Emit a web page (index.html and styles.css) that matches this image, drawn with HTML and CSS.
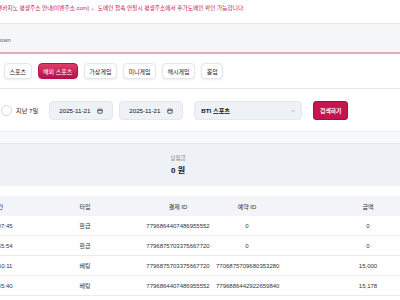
FILE: index.html
```html
<!DOCTYPE html>
<html lang="ko">
<head>
  <meta charset="UTF-8" />
  <meta name="viewport" content="width=device-width, initial-scale=1.0" />
  <title>베팅 내역</title>
  <link rel="stylesheet" href="styles.css">
</head>
<body>
  <div class="page">
    <!-- Notice bar -->
    <div class="notice">텐카지노 평생주소 안내[이벤주소.com] ← 도메인 접속 안될시 평생주소에서 추가도메인 확인 가능합니다.</div>

    <!-- Breadcrumb -->
    <div class="crumb">dropdown</div>

    <!-- Game tabs -->
    <div class="tabs">
      <button class="tab">스포츠</button>
      <button class="tab active">해외 스포츠</button>
      <button class="tab">가상게임</button>
      <button class="tab">미니게임</button>
      <button class="tab">해시게임</button>
      <button class="tab">홀덤</button>
    </div>

    <!-- Filters -->
    <div class="filters">
      <span class="radio"></span>
      <span class="range">지난 7일</span>
      <div class="field date">
        <span>2025-11-21</span>
        <svg viewBox="0 0 8 8" width="6" height="6"><rect x="1" y="1.5" width="6" height="5.5" rx="1" fill="none" stroke="#333" stroke-width="1"/><path d="M1 3.3h6" stroke="#333" stroke-width="1"/></svg>
      </div>
      <div class="field date">
        <span>2025-11-21</span>
        <svg viewBox="0 0 8 8" width="6" height="6"><rect x="1" y="1.5" width="6" height="5.5" rx="1" fill="none" stroke="#333" stroke-width="1"/><path d="M1 3.3h6" stroke="#333" stroke-width="1"/></svg>
      </div>
      <div class="field select">
        <span>BTI 스포츠</span>
        <svg viewBox="0 0 8 8" width="6" height="6"><path d="M2 3l2 2 2-2" fill="none" stroke="#888" stroke-width="0.8"/></svg>
      </div>
      <button class="search">검색하기</button>
    </div>

    <div class="spacer"></div>

    <!-- Summary -->
    <div class="summary">
      <div class="label">당첨금</div>
      <div class="value">0 원</div>
    </div>

    <!-- History table -->
    <div class="table">
      <div class="row head">
        <div>거래 발생 시간</div><div>타입</div><div>결제 ID</div><div>예약 ID</div><div class="amount">금액</div>
      </div>
      <div class="row">
        <div>2025-11-21 09:07:45</div><div>환급</div><div>7796864407486955552</div><div>0</div><div class="amount">0</div>
      </div>
      <div class="row">
        <div>2025-11-21 08:55:54</div><div>환급</div><div>7796875703375667720</div><div>0</div><div class="amount">0</div>
      </div>
      <div class="row">
        <div>2025-11-21 08:50:11</div><div>베팅</div><div>7796875703375667720</div><div>7706875709680353280</div><div class="amount">15,000</div>
      </div>
      <div class="row">
        <div>2025-11-21 08:45:40</div><div>베팅</div><div>7796864407486955552</div><div>7796886442922659840</div><div class="amount">15,178</div>
      </div>
    </div>
  </div>
</body>
</html>
```

FILE: styles.css
```css
/* ===== Base ===== */
* { box-sizing: border-box; margin: 0; padding: 0; }
body {
  overflow: hidden;
  background: #fff;
  color: #222;
  font-family: "Liberation Sans", "Noto Sans CJK KR", sans-serif;
  font-size: 6px;
}
.page { width: 476px; margin-left: -60px; }

/* ===== Top bars ===== */
.notice {
  height: 24px;
  padding-left: 57px;
  display: flex;
  align-items: center;
  color: #c8175a;
  font-size: 5.7px;
  border-bottom: 1px solid #e4e6ea;
  padding-bottom: 8px;
}
.crumb {
  height: 30px;
  padding-left: 46px;
  display: flex;
  align-items: center;
  background: #f5f6f8;
  color: #555;
  font-size: 5.6px;
  border-bottom: 2px solid #e9a9c1;
  padding-top: 3px;
}

/* ===== Tabs ===== */
.tabs {
  display: flex;
  gap: 6px;
  padding: 9px 0 9px 64px;
  border-bottom: 1px solid #e6e9ee;
}
.tab {
  height: 16px;
  padding: 0 4.5px;
  border: 1px solid #e3e6eb;
  border-radius: 4px;
  background: #fff;
  color: #222;
  font-family: inherit;
  font-size: 6px;
  box-shadow: 0 1px 2px rgba(0, 0, 0, 0.07);
}
.tab.active {
  background: linear-gradient(#dc3e67, #b5124b);
  border-color: #b5124b;
  color: #fff;
}

/* ===== Filters ===== */
.filters {
  display: flex;
  align-items: center;
  padding: 12px 0 11px 61px;
}
.radio {
  width: 11px;
  height: 11px;
  border: 1px solid #d3d8df;
  border-radius: 50%;
  background: #fff;
}
.range { margin: 0 11px 0 4px; color: #222; font-size: 6.2px; }
.field {
  height: 19px;
  display: flex;
  align-items: center;
  justify-content: space-between;
  background: #eef1f6;
  border: 1px solid #e3e7ee;
  border-radius: 4px;
  font-size: 6.2px;
  color: #111;
}
.date { width: 64px; padding: 0 9px 0 9px; margin-right: 6px; }
.date + .date { margin-right: 11px; }
.select { width: 108px; padding: 0 5px 0 6px; margin-right: 11px; font-weight: bold; }
.search {
  width: 35px;
  height: 19px;
  border: 1px solid #a5103f;
  border-radius: 3px;
  background: #c4154f;
  color: #fff;
  font-family: inherit;
  font-size: 5.8px;
  font-weight: bold;
}

/* ===== Summary ===== */
.spacer { height: 12px; background: #f8f9fb; border-top: 1px solid #eef0f3; }
.summary {
  height: 43px;
  padding-top: 10px;
  background: #eef2f7;
  border-top: 1px solid #e2e6ec;
  text-align: center;
  margin-bottom: 10px;
}
.summary .label { color: #777; font-size: 5.4px; }
.summary .value { margin-top: 2px; font-size: 8px; font-weight: bold; color: #111; }

/* ===== Table ===== */
.row {
  display: grid;
  grid-template-columns: 90px 110px 76px 62px 1fr;
  height: 20px;
  align-items: center;
  text-align: center;
  white-space: nowrap;
  border-bottom: 1px solid #e8ebf0;
  color: #333;
  font-size: 6px;
}
.row.head { background: #f2f4f8; border-bottom: none; }
.row .amount { padding-left: 42px; }
```
